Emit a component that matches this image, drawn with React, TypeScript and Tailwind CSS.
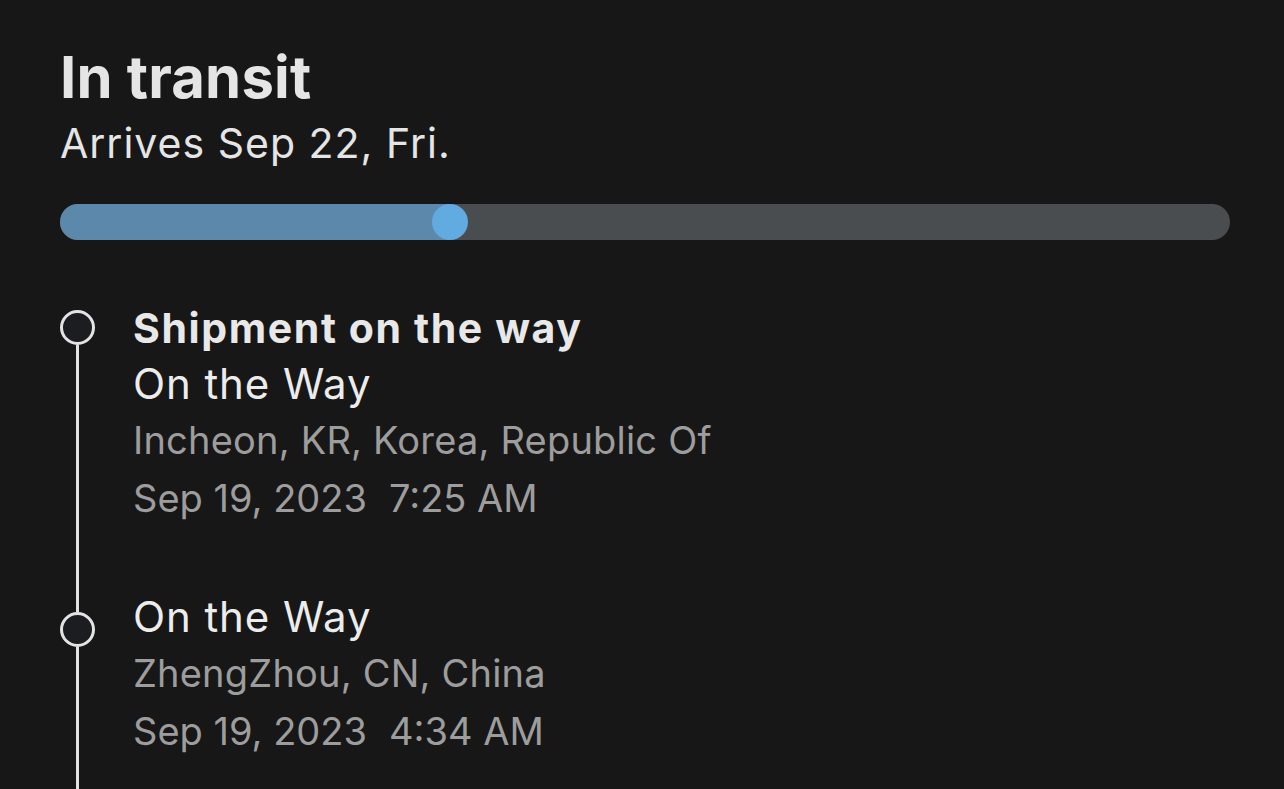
import React from 'react'

type TrackingEvent = {
  heading?: string
  status: string
  place: string
  date: string
  time: string
}

const events: TrackingEvent[] = [
  {
    heading: 'Shipment on the way',
    status: 'On the Way',
    place: 'Incheon, KR, Korea, Republic Of',
    date: 'Sep 19, 2023',
    time: '7:25 AM',
  },
  {
    status: 'On the Way',
    place: 'ZhengZhou, CN, China',
    date: 'Sep 19, 2023',
    time: '4:34 AM',
  },
]

function TimelineItem({ item, first }: { item: TrackingEvent; first: boolean }) {
  return (
    <div className="flex gap-[38px]">
      {/* Marker column: circle + connector */}
      <div className="flex w-[35px] shrink-0 flex-col items-center">
        {first ? (
          <div className="h-[10px]" />
        ) : (
          <div className="h-[23px] w-[3px] bg-[#e3e3e3]" />
        )}
        <div className="h-[35px] w-[35px] shrink-0 rounded-full border-[3px] border-[#e3e3e3] bg-[#1c1d21]" />
        <div className="w-[3px] flex-1 bg-[#e3e3e3]" />
      </div>

      {/* Text column */}
      <div className="flex flex-col pb-[61px]">
        {item.heading && (
          <div className="text-[41px] font-bold leading-[56px] tracking-[1.6px] text-[#e8e8e8]">{item.heading}</div>
        )}
        <div className="text-[42px] leading-[56px] tracking-[0.9px] text-[#ececec]">{item.status}</div>
        <div className="text-[38px] leading-[57px] tracking-[0.2px] text-[#9d9d9d]">{item.place}</div>
        <div className="text-[38px] leading-[59px] text-[#9d9d9d]">
          {item.date}
          <span className="ml-[22px]">{item.time}</span>
        </div>
      </div>
    </div>
  )
}

export default function App() {
  const progress = 390 // px of filled track

  return (
    <div
      className="h-[789px] w-full overflow-hidden bg-[#171717] pl-[60px] pr-[54px] pt-[45px]"
      style={{ fontFamily: 'Inter, "Noto Sans", sans-serif' }}
    >
      {/* Header */}
      <h1 className="text-[58px] font-bold leading-[64px] tracking-[0.2px] text-[#e5e5e5]">In transit</h1>
      <p className="mt-[10px] text-[41px] leading-[48px] tracking-[1px] text-[#e5e5e5]">Arrives Sep 22, Fri.</p>

      {/* Progress bar */}
      <div className="mt-[37px] flex h-[36px] w-full items-center rounded-full bg-[#4a4d50]">
        <div className="h-full rounded-l-full bg-[#5b88ab]" style={{ width: progress }} />
        <div className="-ml-[18px] h-[36px] w-[36px] rounded-full bg-[#61abe0]" />
      </div>

      {/* Timeline */}
      <div className="mt-[60px] flex flex-col">
        {events.map((e, i) => (
          <TimelineItem key={i} item={e} first={i === 0} />
        ))}
      </div>
    </div>
  )
}
